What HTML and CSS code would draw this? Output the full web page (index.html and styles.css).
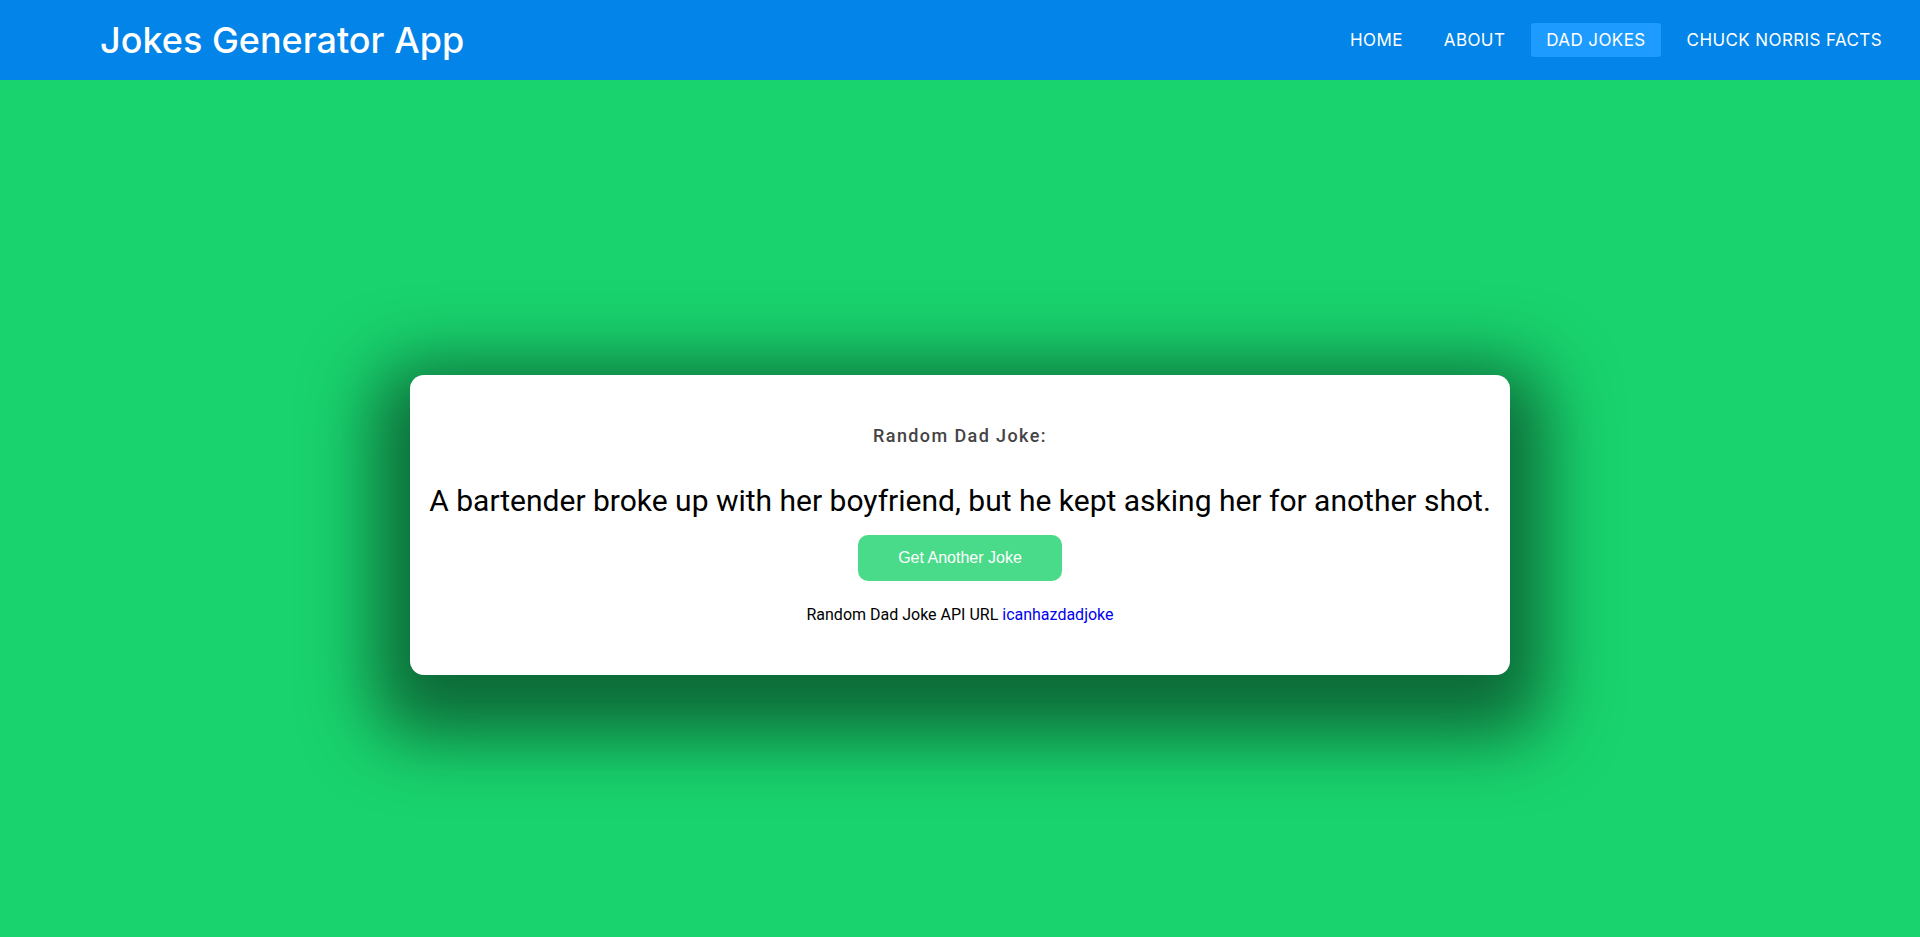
FILE: index.html
```html
<!DOCTYPE html>
<html lang="en">
<head>
<meta charset="utf-8">
<title>Jokes Generator App</title>
<link rel="stylesheet" href="styles.css">
</head>
<body>
<header class="topbar">
  <div class="brand">Jokes Generator App</div>
  <nav class="nav">
    <a class="nav-link" href="#">HOME</a>
    <a class="nav-link" href="#">ABOUT</a>
    <a class="nav-link active" href="#">DAD JOKES</a>
    <a class="nav-link" href="#">CHUCK NORRIS FACTS</a>
  </nav>
</header>
<main class="main">
  <section class="card">
    <h3 class="label">Random Dad Joke:</h3>
    <p class="joke">A bartender broke up with her boyfriend, but he kept asking her for another shot.</p>
    <button class="btn" type="button">Get Another Joke</button>
    <p class="api">Random Dad Joke API URL <a class="api-link" href="#">icanhazdadjoke</a></p>
  </section>
</main>
</body>
</html>
```
FILE: styles.css
```css
* { box-sizing: border-box; }
html, body { margin: 0; padding: 0; }
body {
  background: #19d36e;
  min-height: 937px;
  font-family: Roboto, "Liberation Sans", sans-serif;
  overflow: hidden;
}
.topbar {
  height: 80px;
  background: #0284e8;
  display: flex;
  align-items: center;
  justify-content: space-between;
  padding: 0 23px 0 100px;
}
.brand {
  font-family: Inter, "Noto Sans", sans-serif;
  font-weight: 500;
  font-size: 36px;
  color: #fff;
  letter-spacing: 0;
}
.nav {
  display: flex;
  align-items: center;
  gap: 11px;
}
.nav-link {
  font-family: Inter, "Noto Sans", sans-serif;
  font-size: 17px;
  letter-spacing: 0.4px;
  color: #fff;
  text-decoration: none;
  padding: 0 15px;
  height: 34px;
  line-height: 34px;
  border-radius: 3px;
}
.nav-link.active { background: #1e9bff; }
.main {
  display: flex;
  justify-content: center;
  padding-top: 295px;
}
.card {
  width: 1100px;
  height: 300px;
  background: #fff;
  border-radius: 14px;
  padding: 50px 8px 0;
  text-align: center;
  box-shadow: 0 26px 70px 35px rgba(0, 0, 0, 0.5);
}
.label {
  margin: 0;
  font-size: 18px;
  line-height: 22px;
  font-weight: 500;
  letter-spacing: 1.4px;
  color: #444;
}
.joke {
  margin: 36px 0 0;
  font-size: 30px;
  line-height: 36px;
  color: #000;
  white-space: nowrap;
}
.btn {
  margin-top: 16px;
  width: 204px;
  height: 46px;
  border: none;
  border-radius: 10px;
  background: #4adb8a;
  color: #fff;
  font-family: "Liberation Sans", Arial, sans-serif;
  font-size: 16px;
  cursor: pointer;
}
.api {
  margin: 24px 0 0;
  font-size: 16px;
  line-height: 20px;
  color: #000;
}
.api-link { color: #0000ee; text-decoration: none; }
```
